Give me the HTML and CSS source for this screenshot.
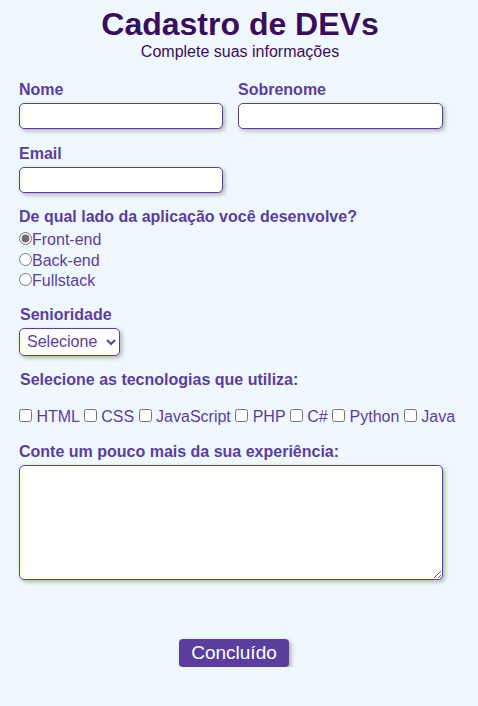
FILE: index.html
```html
<!DOCTYPE html>
<html lang="pt-BR">
<head>
<meta charset="utf-8">
<title>Cadastro de DEVs</title>
<link rel="stylesheet" href="styles.css">
</head>
<body>
<header class="header">
  <h1 class="title">Cadastro de DEVs</h1>
  <p class="subtitle">Complete suas informações</p>
</header>
<form class="form">
  <div class="two-cols">
    <div class="field">
      <label class="label" for="nome">Nome</label>
      <input class="text-input" id="nome" type="text">
    </div>
    <div class="field">
      <label class="label" for="sobrenome">Sobrenome</label>
      <input class="text-input" id="sobrenome" type="text">
    </div>
  </div>
  <div class="field field-email">
    <label class="label" for="email">Email</label>
    <input class="text-input email-input" id="email" type="email">
  </div>
  <div class="field field-side">
    <span class="label">De qual lado da aplicação você desenvolve?</span>
    <div class="radios">
      <label class="radio-row"><input class="radio" type="radio" name="lado" checked>Front-end</label>
      <label class="radio-row"><input class="radio" type="radio" name="lado">Back-end</label>
      <label class="radio-row"><input class="radio" type="radio" name="lado">Fullstack</label>
    </div>
  </div>
  <div class="field field-senior">
    <label class="label label-indent" for="senioridade">Senioridade</label>
    <select class="select" id="senioridade">
      <option>Selecione</option>
      <option>Júnior</option>
      <option>Pleno</option>
      <option>Sênior</option>
    </select>
  </div>
  <div class="field field-tech">
    <span class="label label-indent">Selecione as tecnologias que utiliza:</span>
    <div class="checks"><input class="check" type="checkbox"> HTML <input class="check" type="checkbox"> CSS <input class="check" type="checkbox"> JavaScript <input class="check" type="checkbox"> PHP <input class="check" type="checkbox"> C# <input class="check" type="checkbox"> Python <input class="check" type="checkbox"> Java</div>
  </div>
  <div class="field field-exp">
    <label class="label" for="exp">Conte um pouco mais da sua experiência:</label>
    <textarea class="textarea" id="exp"></textarea>
  </div>
  <div class="actions">
    <button class="button" type="button">Concluído</button>
  </div>
</form>
</body>
</html>
```
FILE: styles.css
```css
html, body {
  margin: 0;
  background: #f0f8ff;
}

body {
  font-family: "Liberation Sans", Arial, sans-serif;
  font-size: 16px;
  color: #5a3e9e;
}

.header {
  padding-top: 6px;
  padding-left: 2px;
  text-align: center;
  color: #3a0c5c;
}

.title {
  margin: 0;
  font-size: 32px;
  font-weight: bold;
  line-height: 37px;
}

.subtitle {
  margin: 0;
  font-size: 16px;
  line-height: 18.5px;
}

.form {
  width: 424px;
  margin: 19.5px 0 0 19px;
}

.two-cols {
  display: grid;
  grid-template-columns: 203.5px 204.5px;
  column-gap: 15.5px;
}

.field {
  display: flex;
  flex-direction: column;
  align-items: flex-start;
}

.label {
  display: block;
  font-weight: bold;
  line-height: 18.5px;
  margin-bottom: 3.7px;
  color: #5a3e9e;
}

.label-indent {
  padding-left: 1px;
}

.text-input {
  box-sizing: border-box;
  width: 100%;
  height: 26px;
  margin: 0;
  border: 1px solid #5a3e9e;
  border-radius: 5px;
  background: #fff;
  box-shadow: 2px 2px 4px rgba(0, 0, 0, 0.28);
  font: inherit;
}

.field-email {
  margin-top: 15.5px;
}

.email-input {
  width: 203.5px;
}

.field-side {
  margin-top: 15.5px;
}

.field-side .label {
  margin-bottom: 3px;
}

.radios {
  display: flex;
  flex-direction: column;
}

.radio-row {
  display: block;
  line-height: 20.67px;
  color: #5a3e9e;
}

.radio {
  margin: 0;
  width: 13px;
  height: 13px;
  accent-color: #6e6e6e;
}

.field-senior {
  margin-top: 14px;
}

.select {
  box-sizing: border-box;
  width: 101px;
  height: 27.5px;
  margin: 0;
  padding: 0 2px 0 3px;
  border: 1px solid #5a3e9e;
  border-radius: 5px;
  background: #fff;
  color: #5a3e9e;
  font: inherit;
  box-shadow: 2px 2px 4px rgba(0, 0, 0, 0.28);
}

.field-tech {
  margin-top: 15px;
}

.field-tech .label {
  margin-bottom: 0;
}

.checks {
  margin-top: 17px;
  line-height: 18.5px;
  white-space: nowrap;
  color: #5a3e9e;
}

.check {
  margin: 3px 0 0 0;
  width: 13px;
  height: 13px;
}

.field-exp {
  margin-top: 16px;
}

.textarea {
  box-sizing: border-box;
  width: 423.5px;
  height: 115.5px;
  margin: 0;
  border: 1px solid #5a3e9e;
  border-radius: 5px;
  background: #fff;
  box-shadow: 2px 2px 4px rgba(0, 0, 0, 0.28);
  font: inherit;
  resize: both;
}

.actions {
  display: flex;
  justify-content: flex-start;
  padding-left: 160px;
  margin-top: 58.5px;
}

.button {
  box-sizing: border-box;
  width: 110px;
  height: 28px;
  padding: 0;
  border: none;
  border-radius: 4px;
  background: #5a3e9e;
  color: #fff;
  font-family: "Liberation Sans", Arial, sans-serif;
  font-size: 19px;
  line-height: 22px;
  box-shadow: 2px 2px 4px rgba(0, 0, 0, 0.3);
  cursor: pointer;
}
```
